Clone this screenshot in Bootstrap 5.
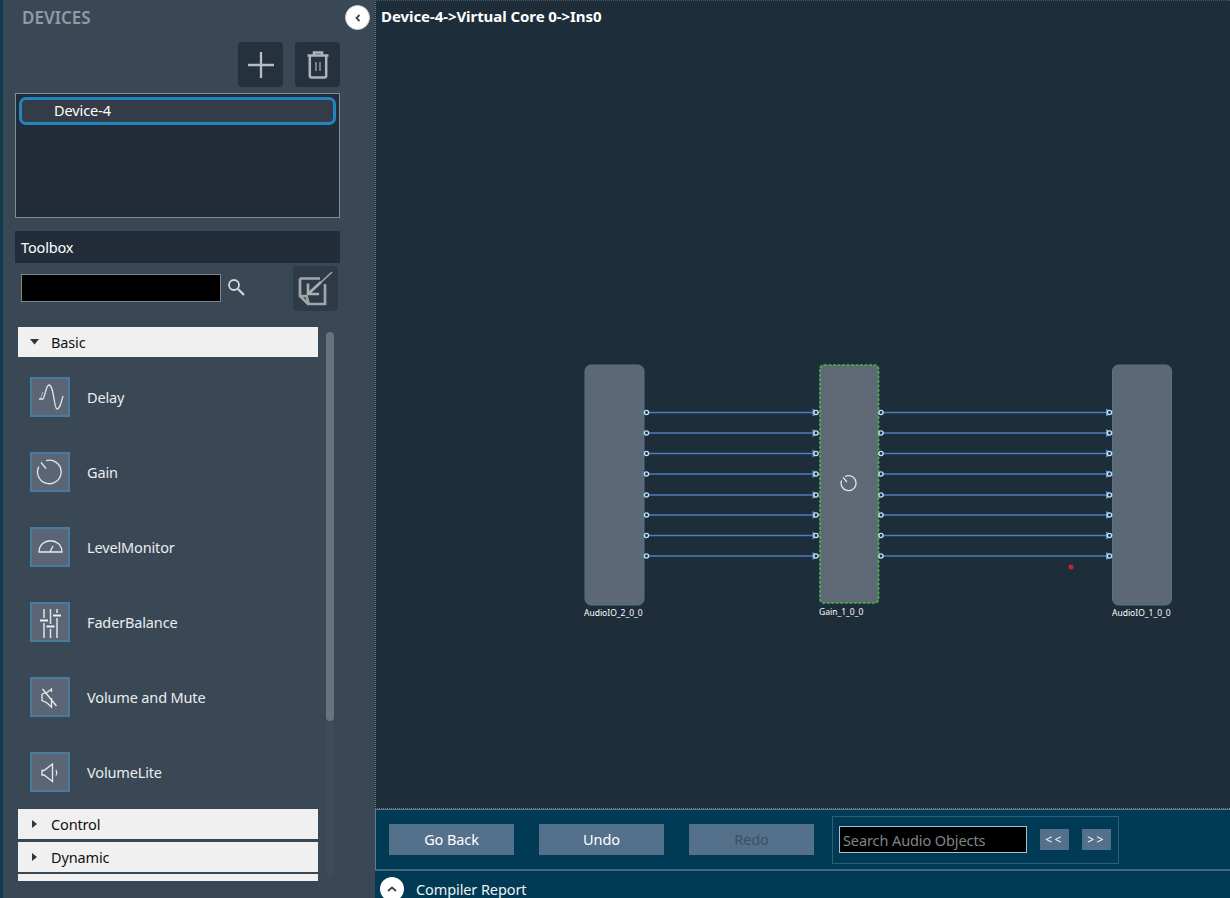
<!DOCTYPE html>
<html lang="en">
<head>
<meta charset="utf-8">
<title>Device-4</title>
<link href="https://cdn.jsdelivr.net/npm/bootstrap@5.3.0/dist/css/bootstrap.min.css" rel="stylesheet">
<style>
html,body{height:100%;overflow:hidden}
body{font-family:"Noto Sans","Open Sans","Liberation Sans",sans-serif;font-size:14.5px;background:#1e2d3a;color:#fff}
.app-root{width:1230px;height:898px}
.side-panel{width:375px;flex:none;height:898px;background:#3a4754;border-left:3px solid #123c4e;position:relative;overflow:hidden}
.side-title{font-size:17px;font-weight:600;color:#8f9ba6;line-height:20px;padding:8px 0 0 19px;height:42px;letter-spacing:0}
.collapse-dot{position:absolute;top:5px;left:342px;width:25px;height:25px;border-radius:50%;background:#fff;border:1px solid #c9ced2;display:flex;align-items:center;justify-content:center;padding:0}
.dev-tools{width:337px;height:51px;gap:12px;align-items:flex-start}
.dark-tile{width:45px;height:45px;background:#25313d;border-radius:4px;border:0;padding:0;display:flex;align-items:center;justify-content:center}
.dev-list{width:325px;height:125px;margin-left:12px;background:#222d39;border:1px solid #858c92;padding:3px}
.dev-item{height:28px;width:317px;border:3px solid #2385bf;border-radius:7px;background:#343c47;color:#fff;padding:0 0 0 32px;line-height:20px;font-size:14.5px;letter-spacing:-.1px}
.tool-head{width:325px;height:32px;margin:13px 0 0 12px;background:#222d39;padding:0 0 0 6px;line-height:32px;font-size:14.5px;letter-spacing:-.15px}
.tool-search{height:64px;padding-left:18px;position:relative}
.tool-input{width:200px;height:28px;margin-top:11px;background:#000;border:1px solid #7d848a;border-radius:0;padding:0}
.tool-input:focus{background:#000;box-shadow:none;border-color:#7d848a}
.mag{margin:15px 0 0 6px;flex:none}
.import-tile{position:absolute;left:290px;top:3px;background:#2e3a47}
.tool-scroll{height:554px;position:relative;overflow:hidden}
.group-head{width:300px;margin-left:15px;height:30px;background:#f0f0f0;color:#111;font-size:14.5px;line-height:30px;display:flex;align-items:center;padding:0;letter-spacing:-.15px}
.caret-box{width:33px;flex:none;display:flex;justify-content:center;margin-top:-1px}
.tool-row{height:75px;margin-left:27px;display:flex;align-items:center;gap:17px;color:#e9edf0;font-size:14.5px;letter-spacing:-.15px;padding-top:5px}
.tool-label{margin-top:2px}
.tool-tile{width:40px;height:40px;background:#5a6675;border:2px solid #4a7a9c;flex:none;display:block}
.tool-list{height:452px}
.gap-a{margin-top:3px}
.sliver{height:7px;margin-top:2px}
.vscroll{position:absolute;left:323px;top:5px;width:8px;height:545px;background:#3f4c58;border-radius:4px}
.vthumb{height:389px;background:#68737e;border-radius:4px}
.main-area{width:855px;flex:none;height:898px}
.canvas-area{height:809px;background:#1e2d3a;position:relative;border-left:1px dotted #6f7a84;border-top:1px dotted #4a5660;border-bottom:1px dotted #6f7a84}
.crumb{position:absolute;left:5px;top:5px;font-size:15px;font-weight:700;line-height:20px;letter-spacing:-.07px;z-index:1}
.graph-svg{position:absolute;left:0;top:-1px;display:block}
.graph-svg text{font-family:"Noto Sans","Liberation Sans",sans-serif;font-size:8.500px;fill:#fff}
.action-bar{height:62px;background:#003a55;border-left:1px solid #5f7a8a;border-bottom:2px solid #47687c;border-top:1px solid #5f7a8a;padding-left:13px;align-items:center}
.act-btn{width:125px;height:31px;background:#54708a;border:0;border-radius:0;color:#fff;font-size:14.5px;padding:0;letter-spacing:-.1px;margin-right:25px}
.act-btn:disabled{background:#54708a;color:#3d5165;opacity:1}
.find-group{width:287px;height:48px;border:1px solid #2b5f78;margin-left:-7px;padding-left:6px;align-items:center}
.find-input{width:188px;height:27px;background:#000;border:1px solid #a4c0d0;border-radius:0;color:#fff;font-size:14.5px;padding:0 3px;letter-spacing:-.1px}
.find-input::placeholder{color:#7f8488;opacity:1}
.find-input:focus{background:#000;color:#fff;box-shadow:none;border-color:#a4c0d0}
.step-btn{width:29px;height:21px;background:#54708a;border:0;border-radius:0;color:#fff;font-size:12px;padding:0;line-height:19px;margin-left:13px;letter-spacing:2.500px}
.report-bar{height:27px;background:#003a55;padding-left:5px;position:relative;overflow:hidden}
.report-dot{width:24px;height:24px;border-radius:50%;background:#fff;margin-top:6px;flex:none;display:flex;align-items:center;justify-content:center;padding:0;border:0}
.report-text{margin:9px 0 0 12px;font-size:14.5px;line-height:18px;letter-spacing:-.1px;color:#eef2f4}
</style>
</head>
<body>
<div class="app-root d-flex">
  <aside class="side-panel d-flex flex-column">
    <div class="side-title">DEVICES</div>
    <button class="collapse-dot" aria-label="Collapse"><svg width="10" height="10" viewBox="0 0 10 10"><path d="M6.500 2 3.500 5l3 3" fill="none" stroke="#444" stroke-width="1.800"/></svg></button>
    <div class="dev-tools d-flex justify-content-end">
      <button class="dark-tile" aria-label="Add"><svg width="28" height="28" viewBox="0 0 28 28"><path d="M14 1v26M1 14h26" stroke="#b9bec2" stroke-width="2.300"/></svg></button>
      <button class="dark-tile" aria-label="Delete"><svg width="24" height="30" viewBox="0 0 24 30"><path d="M1.500 5.500h21" stroke="#aeb3b7" stroke-width="2.500"/><path d="M8 5V2.500h8V5M3.800 6v19.500c0 1.200.8 2 2 2h12.400c1.200 0 2-.8 2-2V6" fill="none" stroke="#aeb3b7" stroke-width="2.500"/><path d="M10 12v9M14 12v9" stroke="#8f969b" stroke-width="1.500"/></svg></button>
    </div>
    <div class="dev-list"><div class="dev-item">Device-4</div></div>
    <div class="tool-head">Toolbox</div>
    <div class="tool-search d-flex">
      <input class="form-control tool-input" type="text" aria-label="Search toolbox">
      <svg class="mag" width="19" height="19" viewBox="0 0 19 19"><circle cx="7" cy="7" r="5" fill="none" stroke="#d5d9dc" stroke-width="1.800"/><path d="M11 11l6 6" stroke="#d5d9dc" stroke-width="2.200"/></svg>
      <button class="dark-tile import-tile" aria-label="Import"><svg width="45" height="45" viewBox="0 0 45 45"><path d="M7 12.500H27M32 18V38H15L7 30V12.500" fill="none" stroke="#a0a5a9" stroke-width="2.700"/><path d="M7.500 30h6l2 7" fill="none" stroke="#a0a5a9" stroke-width="2.700"/><path d="M24 20 39 6" stroke="#a0a5a9" stroke-width="1.600"/><path d="M28 16 15 28M15 17.500V28H26" fill="none" stroke="#a9aeb2" stroke-width="2.600"/></svg></button>
    </div>
    <div class="tool-scroll">
      <div class="group-head"><span class="caret-box"><svg width="9" height="6" viewBox="0 0 9 6"><path d="M0 0h9L4.500 5.500z" fill="#333"/></svg></span>Basic</div>
      <div class="tool-list">
        <div class="tool-row"><svg class="tool-tile" viewBox="1 1 36 36"><path d="M9 22 12 14" stroke="#a8adb3" fill="none"/><path d="M8 21h4C14 19 15 7 18 7c5 0 5 24 8 24 3 0 4-6 6-13" fill="none" stroke="#dfe3e6" stroke-width="1.300"/></svg><span class="tool-label">Delay</span></div>
        <div class="tool-row"><svg class="tool-tile" viewBox="1 1 36 36"><path d="M15 7.600A11.800 11.800 0 1 1 7.800 13.600M10 9.500l5 6" fill="none" stroke="#e3e6e9" stroke-width="1.300"/></svg><span class="tool-label">Gain</span></div>
        <div class="tool-row"><svg class="tool-tile" viewBox="1 1 36 36"><path d="M8 24C8.500 9 30.500 9 31 24zM19 24l3-6" fill="none" stroke="#e9ecee" stroke-width="1.300"/></svg><span class="tool-label">LevelMonitor</span></div>
        <div class="tool-row"><svg class="tool-tile" viewBox="1 1 36 36"><path d="M13 6v9M13 20v15M19.500 6v15M19.500 26v9M26 6v4M26 15v20" stroke="#dfe3e6" stroke-width="1.500"/><path d="M9 17.500h8M15.500 23.500h8M22 12.500h8" stroke="#eef0f2" stroke-width="2"/></svg><span class="tool-label">FaderBalance</span></div>
        <div class="tool-row"><svg class="tool-tile" viewBox="1 1 36 36"><path d="M11 16v6.500l4.500 2 5 4.500v-9M20.500 14V11l-4.500 3.500L11 16M11.500 11l14 17" fill="none" stroke="#e9ecee" stroke-width="1.300"/></svg><span class="tool-label">Volume and Mute</span></div>
        <div class="tool-row"><svg class="tool-tile" viewBox="1 1 36 36"><path d="M21.500 11 13 17.500h-2V22h2l8.500 6.500zM25 17c1 1.800 1 3.800 0 5.500" fill="none" stroke="#e9ecee" stroke-width="1.300"/></svg><span class="tool-label">VolumeLite</span></div>
      </div>
      <div class="group-head"><span class="caret-box"><svg width="5" height="8" viewBox="0 0 5 8"><path d="M0 0l5 4-5 4z" fill="#333"/></svg></span>Control</div>
      <div class="group-head gap-a"><span class="caret-box"><svg width="5" height="8" viewBox="0 0 5 8"><path d="M0 0l5 4-5 4z" fill="#333"/></svg></span>Dynamic</div>
      <div class="group-head sliver"></div>
      <div class="vscroll"><div class="vthumb"></div></div>
    </div>
  </aside>
  <main class="main-area d-flex flex-column">
    <div class="canvas-area">
      <div class="crumb">Device-4-&gt;Virtual Core 0-&gt;Ins0</div>
      <svg class="graph-svg" width="854" height="808" viewBox="376 0 854 808">
        <defs>
          <g id="pinOut"><circle r="2.100" fill="#1e2d3a" stroke="#bfe3f5" stroke-width="1.400"/></g>
          <g id="pinIn"><path d="M-3.500-4 3.500 0-3.500 4z" fill="#5d94cf"/><circle r="2.100" fill="#1e2d3a" stroke="#bfe3f5" stroke-width="1.400"/></g>
        </defs>
        <g stroke="#4d7cbf" stroke-width="1.700">
          <path d="M646 412.500H816M646 433H816M646 453.500H816M646 474H816M646 495H816M646 515H816M646 535.500H816M646 556H816"/>
          <path d="M881 412.500H1110M881 433H1110M881 453.500H1110M881 474H1110M881 495H1110M881 515H1110M881 535.500H1110M881 556H1110"/>
        </g>
        <rect x="585" y="365" width="59" height="240" rx="6" fill="#5c6876" stroke="#56738c"/>
        <rect x="1112.500" y="365" width="59" height="240" rx="6" fill="#5c6876" stroke="#56738c"/>
        <rect x="820" y="365" width="58.500" height="238" rx="4" fill="#5f6976" stroke="#4fb04b" stroke-width="1.700" stroke-dasharray="3 1.500"/>
        <path d="M845 476.500A7.500 7.500 0 1 1 841.500 480.500M843 477.500l4 4.500" fill="none" stroke="#e3e6e9" stroke-width="1.200"/>
        <use href="#pinOut" x="646.500" y="412.500"/><use href="#pinOut" x="646.500" y="433"/><use href="#pinOut" x="646.500" y="453.500"/><use href="#pinOut" x="646.500" y="474"/><use href="#pinOut" x="646.500" y="495"/><use href="#pinOut" x="646.500" y="515"/><use href="#pinOut" x="646.500" y="535.500"/><use href="#pinOut" x="646.500" y="556"/>
        <use href="#pinIn" x="816" y="412.500"/><use href="#pinIn" x="816" y="433"/><use href="#pinIn" x="816" y="453.500"/><use href="#pinIn" x="816" y="474"/><use href="#pinIn" x="816" y="495"/><use href="#pinIn" x="816" y="515"/><use href="#pinIn" x="816" y="535.500"/><use href="#pinIn" x="816" y="556"/>
        <use href="#pinOut" x="881" y="412.500"/><use href="#pinOut" x="881" y="433"/><use href="#pinOut" x="881" y="453.500"/><use href="#pinOut" x="881" y="474"/><use href="#pinOut" x="881" y="495"/><use href="#pinOut" x="881" y="515"/><use href="#pinOut" x="881" y="535.500"/><use href="#pinOut" x="881" y="556"/>
        <use href="#pinIn" x="1109.500" y="412.500"/><use href="#pinIn" x="1109.500" y="433"/><use href="#pinIn" x="1109.500" y="453.500"/><use href="#pinIn" x="1109.500" y="474"/><use href="#pinIn" x="1109.500" y="495"/><use href="#pinIn" x="1109.500" y="515"/><use href="#pinIn" x="1109.500" y="535.500"/><use href="#pinIn" x="1109.500" y="556"/>
        <circle cx="1071" cy="567" r="2.500" fill="#c9202c"/>
        <text x="584" y="615.500">AudioIO_2_0_0</text>
        <text x="819" y="614.500">Gain_1_0_0</text>
        <text x="1112" y="615.500">AudioIO_1_0_0</text>
      </svg>
    </div>
    <div class="action-bar d-flex">
      <button class="btn act-btn">Go Back</button>
      <button class="btn act-btn">Undo</button>
      <button class="btn act-btn" disabled>Redo</button>
      <div class="find-group d-flex">
        <input class="form-control find-input" type="text" placeholder="Search Audio Objects">
        <button class="btn step-btn">&lt;&lt;</button>
        <button class="btn step-btn">&gt;&gt;</button>
      </div>
    </div>
    <div class="report-bar d-flex">
      <button class="report-dot" aria-label="Expand"><svg width="12" height="10" viewBox="0 0 12 10"><path d="M2 7l4-3.500L10 7" fill="none" stroke="#444" stroke-width="1.800"/></svg></button>
      <div class="report-text">Compiler Report</div>
    </div>
  </main>
</div>
<script src="https://cdn.jsdelivr.net/npm/bootstrap@5.3.0/dist/js/bootstrap.bundle.min.js"></script>
</body>
</html>
